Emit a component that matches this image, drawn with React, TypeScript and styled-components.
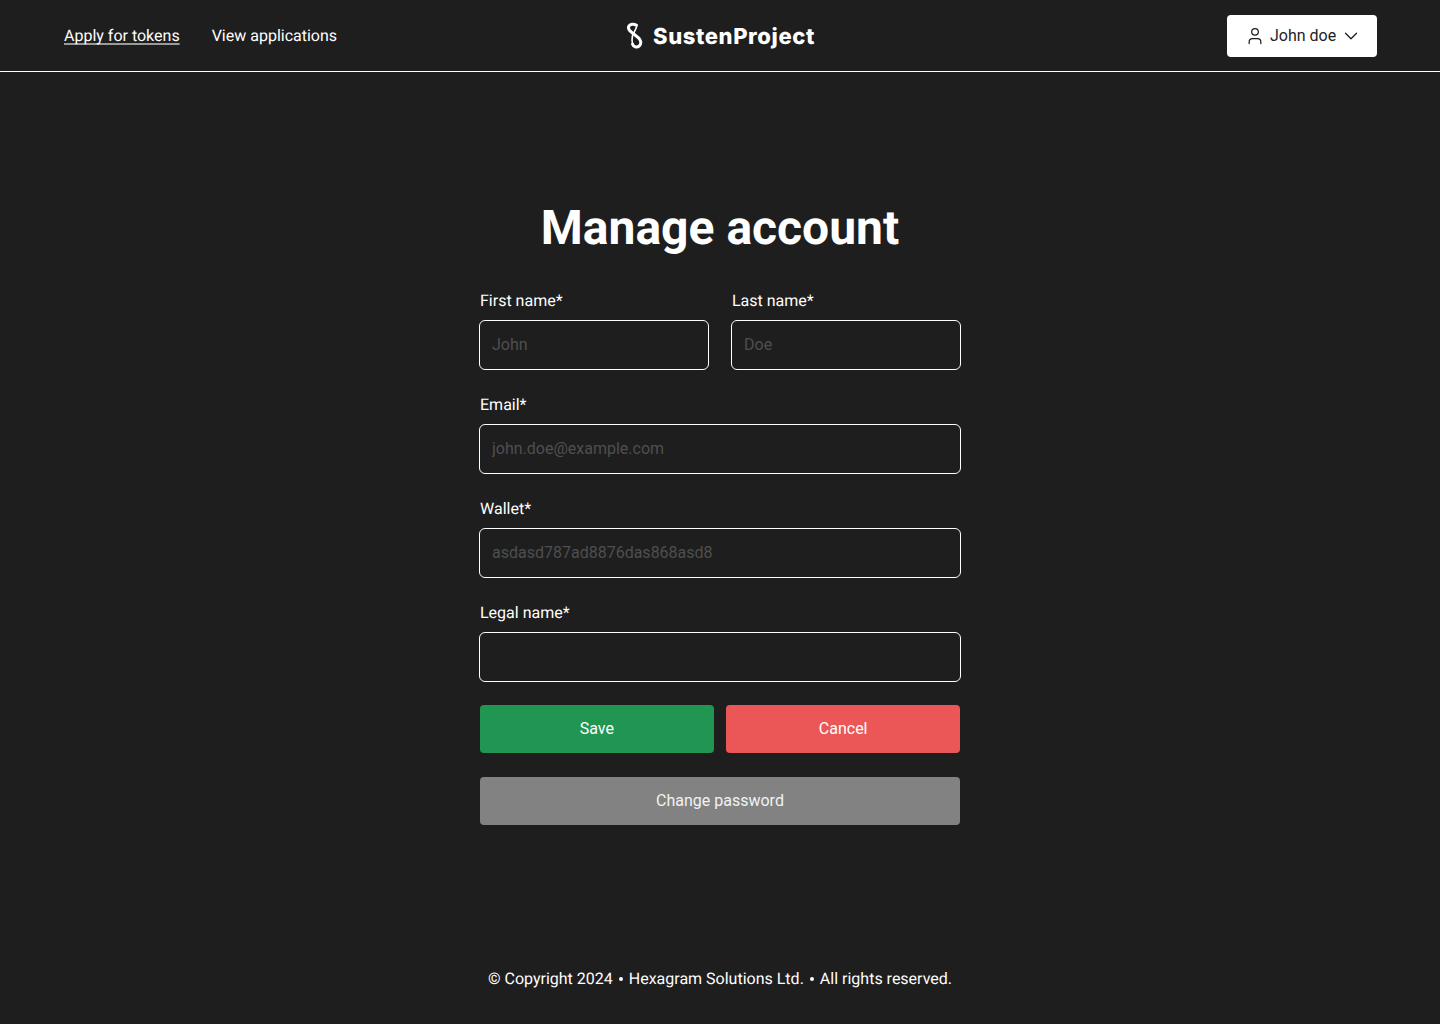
import styled, { createGlobalStyle } from "styled-components";
import { User, ChevronDown } from "lucide-react";

const GlobalStyle = createGlobalStyle`
  html, body {
    margin: 0;
    padding: 0;
    background: #1e1e1e;
    font-family: Roboto, "Liberation Sans", sans-serif;
    text-rendering: geometricPrecision;
  }
  * { box-sizing: border-box; }
`;

function Logo() {
  return (
    <LogoMark width="18" height="28" viewBox="1 0 18 28" fill="none">
      <path
        d="M11.4 3.2C9 1.6 4.6 1.8 3.6 4.8C2.8 7.4 4.8 9.2 7.4 11L12.8 15.2C16 17.6 16.6 21.2 14.6 23.6C12.2 26 8.6 25.4 7.6 22.2"
        stroke="#fff"
        strokeWidth="3"
        strokeLinecap="round"
      />
      <path
        d="M11.8 3.4C11.6 7.4 8.4 10.5 7.4 14C6.8 17 6.8 19.5 7.6 22.2"
        stroke="#fff"
        strokeWidth="1.6"
        strokeLinecap="round"
      />
    </LogoMark>
  );
}

export default function App() {
  return (
    <Page>
      <GlobalStyle />
      <Header>
        <NavLinks>
          <NavLink $active>Apply for tokens</NavLink>
          <NavLink>View applications</NavLink>
        </NavLinks>
        <Brand>
          <Logo />
          <BrandName>SustenProject</BrandName>
        </Brand>
        <UserButton>
          <User size={20} strokeWidth={1.5} />
          <UserName>John doe</UserName>
          <ChevronDown size={22} strokeWidth={1.4} />
        </UserButton>
      </Header>

      <Main>
        <Title>Manage account</Title>
        <Form>
          <Row>
            <Field>
              <Label>First name*</Label>
              <Input placeholder="John" />
            </Field>
            <Field>
              <Label>Last name*</Label>
              <Input placeholder="Doe" />
            </Field>
          </Row>
          <Field>
            <Label>Email*</Label>
            <Input placeholder="john.doe@example.com" />
          </Field>
          <Field>
            <Label>Wallet*</Label>
            <Input placeholder="asdasd787ad8876das868asd8" />
          </Field>
          <Field>
            <Label>Legal name*</Label>
            <Input />
          </Field>
          <Buttons>
            <ActionRow>
              <Button $bg="#219653">Save</Button>
              <Button $bg="#eb5757">Cancel</Button>
            </ActionRow>
            <Button $bg="#828282" $muted>Change password</Button>
          </Buttons>
        </Form>
      </Main>

      <Footer>
        <span>© Copyright 2024</span>
        <Dot />
        <span>Hexagram Solutions Ltd.</span>
        <Dot />
        <span>All rights reserved.</span>
      </Footer>
    </Page>
  );
}

const Page = styled.div`
  min-height: 1024px;
  display: flex;
  flex-direction: column;
  background: #1e1e1e;
  color: #fff;
`;

const Header = styled.header`
  height: 72px;
  padding: 0 63px 0 64px;
  display: grid;
  grid-template-columns: 1fr auto 1fr;
  align-items: center;
  border-bottom: 1px solid #fff;
`;

const NavLinks = styled.nav`
  display: flex;
  gap: 32px;
`;

const NavLink = styled.a<{ $active?: boolean }>`
  font-size: 16px;
  line-height: 24px;
  color: #fff;
  cursor: pointer;
  ${(p) =>
    p.$active &&
    "text-decoration: underline; text-decoration-color: #9a9a9a; text-decoration-thickness: 2px; text-decoration-skip-ink: none; text-underline-offset: 2px;"}
`;

const Brand = styled.div`
  display: flex;
  align-items: center;
  gap: 9px;
`;

const LogoMark = styled.svg`
  display: block;
`;

const BrandName = styled.span`
  padding-top: 2px;
  font-family: Inter, sans-serif;
  font-size: 22px;
  font-weight: 800;
  letter-spacing: 0.6px;
`;

const UserButton = styled.button`
  justify-self: end;
  width: 150px;
  height: 42px;
  padding: 0 0 0 18px;
  display: flex;
  align-items: center;
  gap: 5px;
  background: #fff;
  color: #1e1e1e;
  border: 0;
  border-radius: 4px;
  font-family: inherit;
  font-size: 16px;
`;

const UserName = styled.span`
  margin-right: -1.5px;
`;

const Main = styled.main`
  flex: 1;
  display: flex;
  flex-direction: column;
  align-items: center;
  padding-top: 126px;
`;

const Title = styled.h1`
  margin: 0 0 31px;
  font-size: 48px;
  line-height: 60px;
  font-weight: 700;
`;

const Form = styled.form`
  width: 480px;
  display: flex;
  flex-direction: column;
  gap: 23px;
`;

const Row = styled.div`
  display: grid;
  grid-template-columns: 1fr 1fr;
  gap: 24px;
`;

const Field = styled.label`
  display: flex;
  flex-direction: column;
  gap: 7px;
`;

const Label = styled.span`
  font-size: 16px;
  line-height: 24px;
`;

const Input = styled.input`
  width: calc(100% + 2px);
  margin-left: -1px;
  height: 50px;
  padding: 0 12px 2px;
  background: transparent;
  border: 1px solid #fff;
  border-radius: 6px;
  color: #fff;
  font-family: inherit;
  font-size: 16px;
  &::placeholder {
    color: #4f4f4f;
    opacity: 1;
  }
`;

const Buttons = styled.div`
  display: flex;
  flex-direction: column;
  gap: 24px;
`;

const ActionRow = styled.div`
  display: grid;
  grid-template-columns: 1fr 1fr;
  gap: 12.6px;
`;

const Button = styled.button<{ $bg: string; $muted?: boolean }>`
  height: 48px;
  padding: 0 0 2px;
  border: 0;
  border-radius: 4px;
  background: ${(p) => p.$bg};
  color: ${(p) => (p.$muted ? "#f2f2f2" : "#fff")};
  font-family: inherit;
  font-size: 16px;
`;

const Footer = styled.footer`
  height: 90px;
  display: flex;
  justify-content: center;
  gap: 6px;
  align-items: center;
  font-size: 16px;
  line-height: 24px;
`;

const Dot = styled.i`
  width: 4px;
  height: 4px;
  border-radius: 50%;
  background: #fff;
`;
